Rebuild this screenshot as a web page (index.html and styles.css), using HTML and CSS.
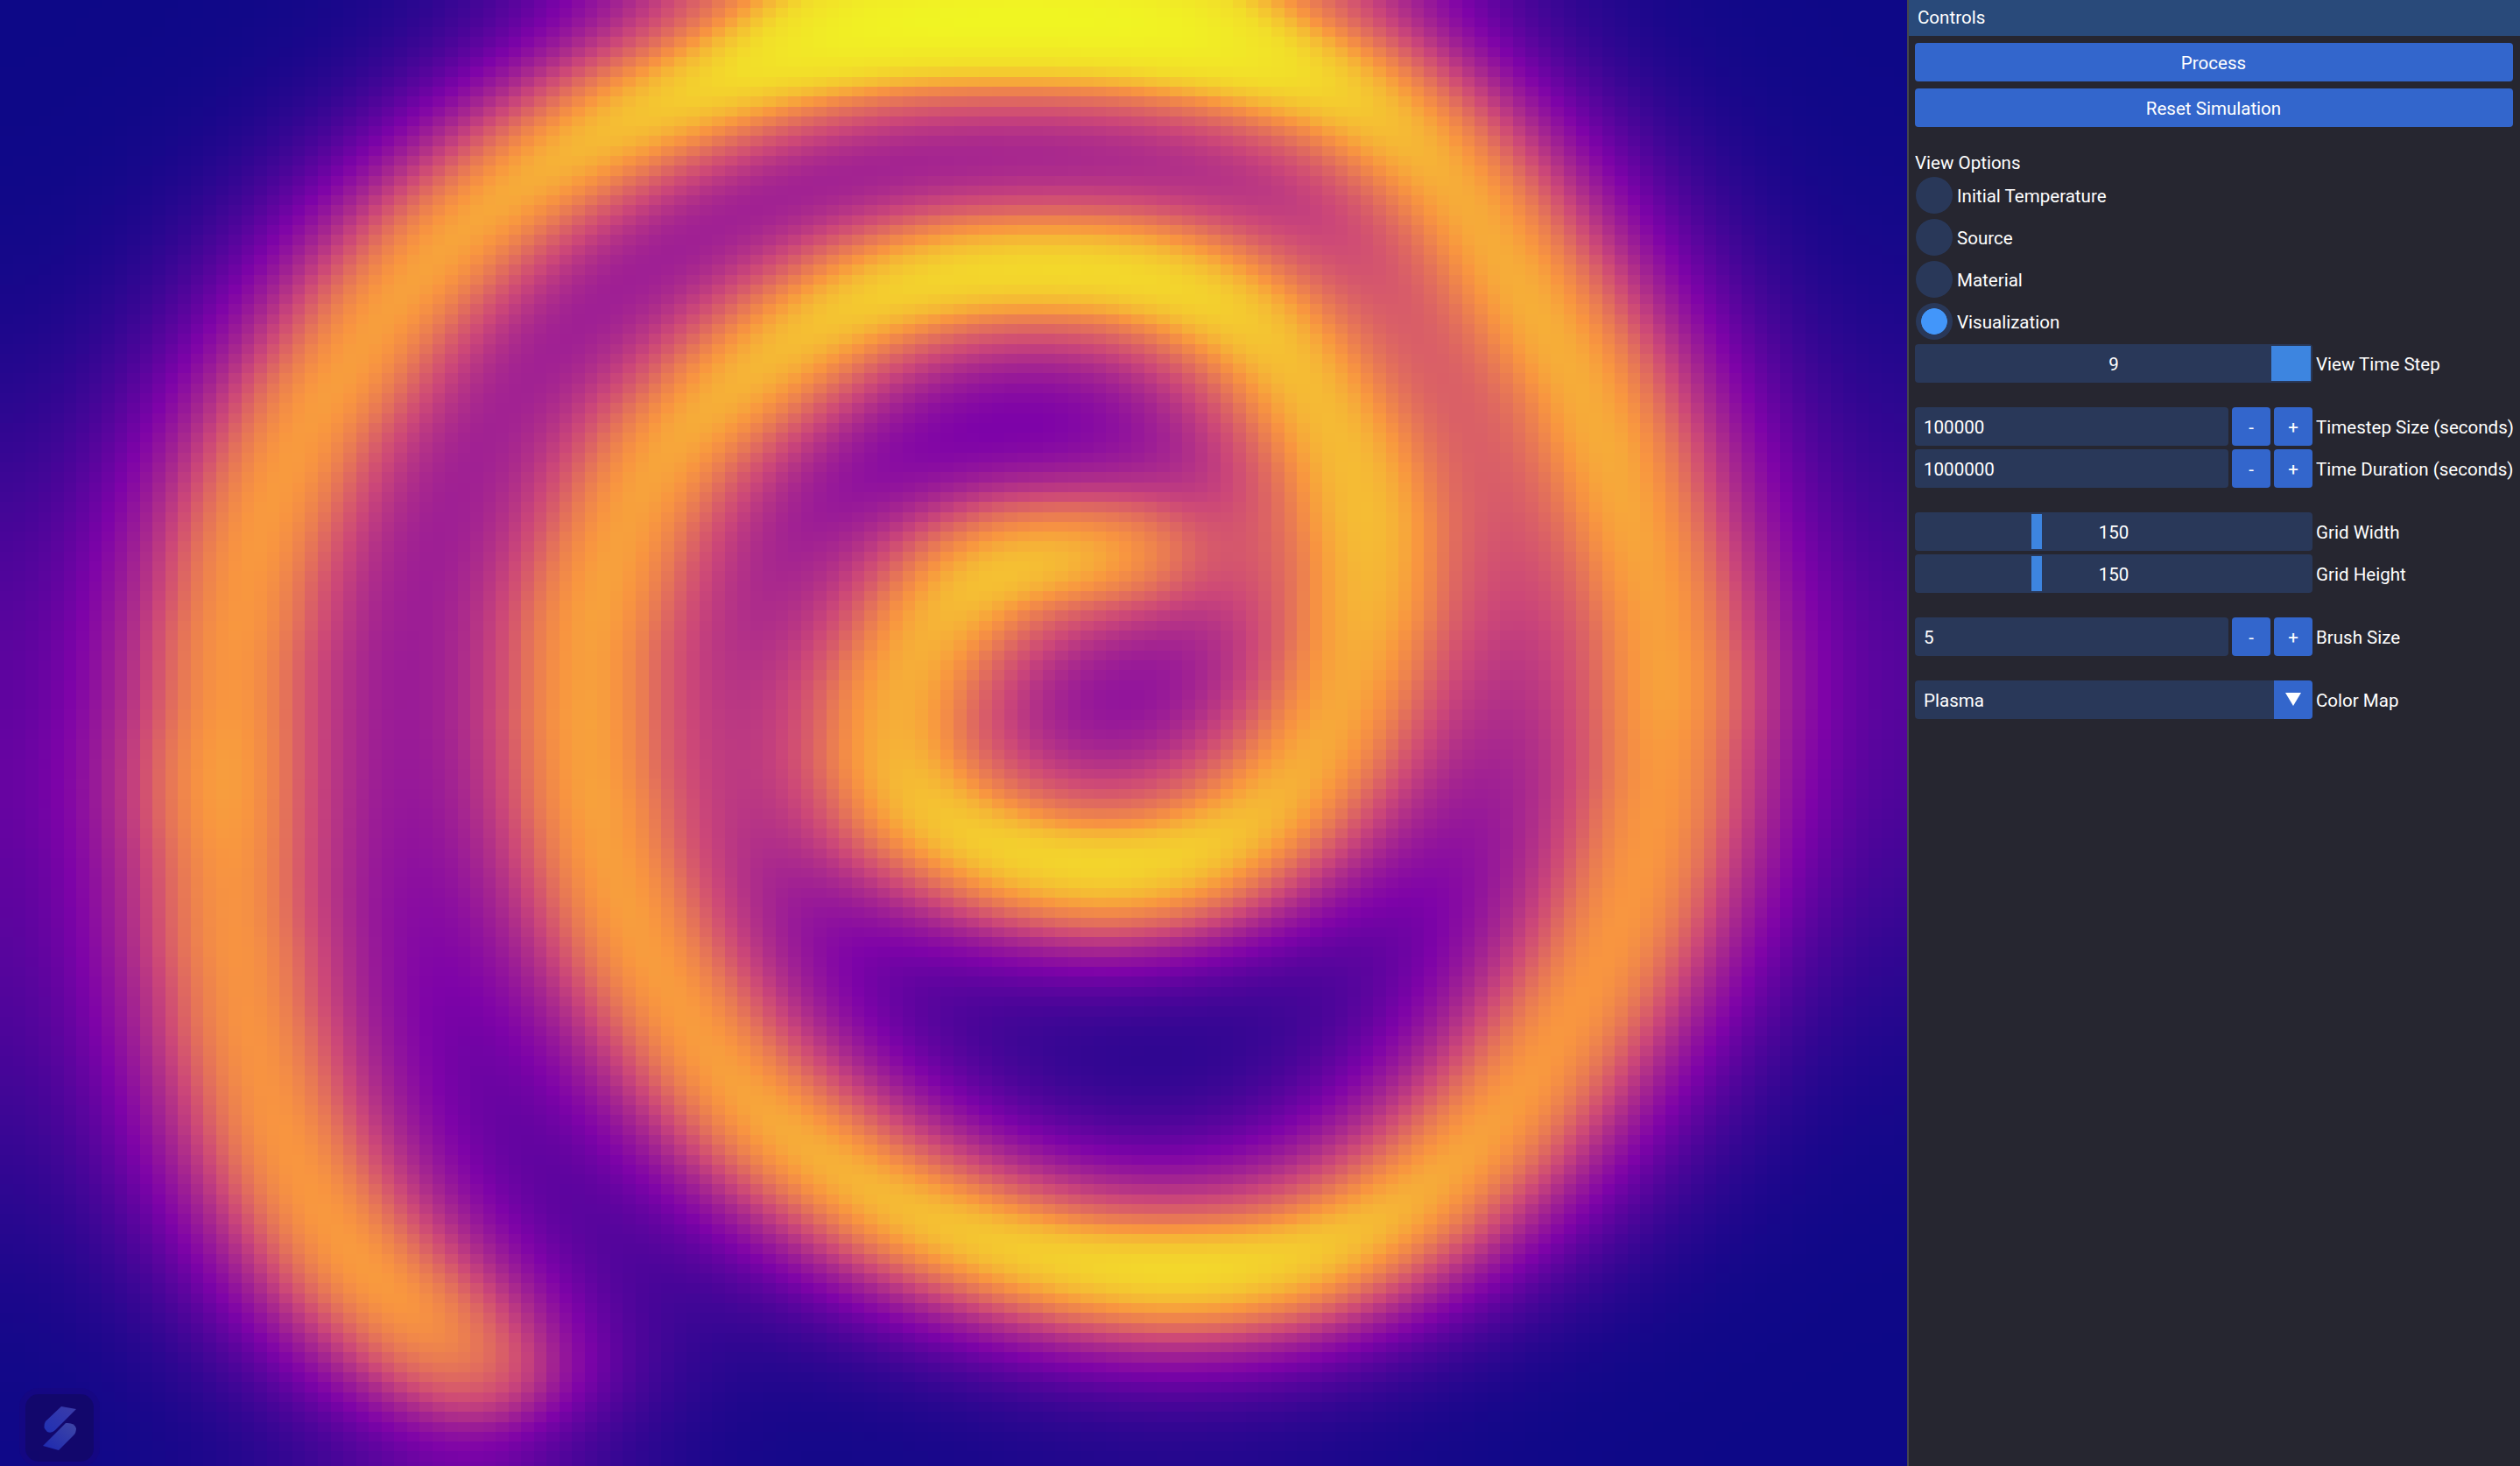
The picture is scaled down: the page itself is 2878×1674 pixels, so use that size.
FILE: index.html
```html
<!DOCTYPE html>
<html lang="en">
<head>
<meta charset="utf-8">
<title>Heat Simulation</title>
<link rel="stylesheet" href="styles.css">
</head>
<body>
<main class="viewport">
  <canvas class="field" id="field" width="150" height="150"></canvas>
  <svg class="badge" viewBox="0 0 92 90" aria-hidden="true">
    <defs>
      <linearGradient id="up" x1="0" y1="1" x2="1" y2="0"><stop offset="0" stop-color="#2030b4"/><stop offset="1" stop-color="#3c3ca8"/></linearGradient>
      <linearGradient id="down" x1="0" y1="1" x2="1" y2="0"><stop offset="0" stop-color="#1c28b0"/><stop offset="1" stop-color="#3f46a6"/></linearGradient>
    </defs>
    <rect class="badge-halo" x="0" y="0" width="92" height="90" rx="22"/>
    <rect class="badge-face" x="7" y="7" width="78" height="77" rx="15"/>
    <path fill="url(#up)" d="M48 21L65 24L41 48Q37 52 32 50Q26 45 30 38Z"/>
    <path fill="url(#down)" d="M53 40Q63 39 65 46Q65 51 62 54L45 71L27 66Z"/>
  </svg>
</main>
<aside class="panel">
  <h1 class="title">Controls</h1>
  <div class="body">
    <button class="btn wide">Process</button>
    <button class="btn wide">Reset Simulation</button>
    <h2 class="heading">View Options</h2>
    <label class="radio"><span class="dot"></span><span class="label">Initial Temperature</span></label>
    <label class="radio"><span class="dot"></span><span class="label">Source</span></label>
    <label class="radio"><span class="dot"></span><span class="label">Material</span></label>
    <label class="radio"><span class="dot on"></span><span class="label">Visualization</span></label>
    <div class="row"><div class="slider last"><span class="grab"></span><span class="label">9</span></div><span class="label">View Time Step</span></div>
    <div class="row gap"><div class="input">100000</div><button class="btn step">-</button><button class="btn step">+</button><span class="label">Timestep Size (seconds)</span></div>
    <div class="row"><div class="input">1000000</div><button class="btn step">-</button><button class="btn step">+</button><span class="label">Time Duration (seconds)</span></div>
    <div class="row gap"><div class="slider"><span class="grab"></span><span class="label">150</span></div><span class="label">Grid Width</span></div>
    <div class="row"><div class="slider"><span class="grab"></span><span class="label">150</span></div><span class="label">Grid Height</span></div>
    <div class="row gap"><div class="input">5</div><button class="btn step">-</button><button class="btn step">+</button><span class="label">Brush Size</span></div>
    <div class="row gap"><div class="combo"><span class="choice label">Plasma</span><span class="arrow"><svg width="18" height="16" viewBox="0 0 18 16"><path fill="#fff" d="M0 0H18L9 15Z"/></svg></span></div><span class="label">Color Map</span></div>
  </div>
</aside>
<script src="field.js"></script>
</body>
</html>
```
FILE: styles.css
```css
* { box-sizing: border-box; }
body { margin: 0; display: flex; width: 2878px; height: 1674px; overflow: hidden; background: #262630; font: 20.55px/28px Roboto, sans-serif; color: #fff; }
.viewport { position: relative; flex: none; display: flex; flex-direction: column; justify-content: center; width: 2178px; height: 1674px; overflow: hidden; }
.field { flex: none; display: block; width: 2178px; height: 1694px; margin-top: -9px; image-rendering: pixelated; }
.badge { position: absolute; left: 22px; top: 1585px; width: 92px; height: 90px; }
.badge-halo { fill: #17077e; opacity: .6; }
.badge-face { fill: #120868; opacity: .85; }
.panel { flex: none; width: 700px; border-left: 2px solid #45454f; }
.title { margin: 0; height: 41px; padding: 6px 10px; font-size: inherit; font-weight: 400; line-height: 28px; background: #294a7a; }
.body { display: flex; flex-direction: column; gap: 4px; padding: 8px 8px 0 7px; }
.btn { display: block; flex: none; height: 44px; padding: 2px 0 0; border: 0; border-radius: 4px; background: #3366cc; color: #fff; font: inherit; text-align: center; }
.wide { width: 100%; margin-bottom: 4px; padding-right: 1px; }
.heading { margin: 19px 0 0; height: 25px; font-size: inherit; font-weight: 400; line-height: 28px; }
.radio { display: flex; align-items: center; gap: 4px; height: 44px; }
.label { padding-top: 2px; }
.dot { width: 44px; height: 44px; border: 1px solid #262630; border-radius: 50%; background: #293859; }
.on { background: radial-gradient(circle, #4296fa 14.5px, #293859 15.2px); }
.row { display: flex; align-items: center; gap: 4px; height: 44px; white-space: nowrap; }
.gap { margin-top: 24px; }
.slider, .combo { position: relative; flex: none; width: 454px; height: 44px; border-radius: 4px; background: #293859; display: grid; place-items: center; }
.grab { position: absolute; left: 133px; top: 2px; width: 12px; height: 40px; background: #3d85e0; }
.last .grab { left: 407px; width: 45px; }
.input { flex: none; width: 358px; height: 44px; padding: 9px 10px; border-radius: 4px; background: #293859; }
.step { width: 44px; }
.combo { display: flex; overflow: hidden; }
.choice { flex: 1; padding-left: 10px; }
.arrow { width: 44px; height: 44px; background: #3366cc; display: grid; place-items: center; }
```
FILE: field.js
```js
// Heat diffusion from a painted spiral source, on a square grid with insulated edges.
const N = 150, STEPS = 9;
const BRUSH = 5.17;
const DIFFUSE_X = 8.4, DIFFUSE_Y = 4.56;
const GAIN = 0.1585;

// Brush path, in grid cells.
const STROKE = [
  [88.5,57.0],[83.2,57.0],[79.4,57.2],[75.8,60.0],[73.2,64.4],[71.3,68.7],[70.0,73.0],[69.6,77.8],[71.7,82.5],
  [75.7,86.2],[80.9,89.2],[87.1,90.7],[93.4,89.3],[98.1,85.6],[101.8,81.2],[104.5,76.1],[106.2,70.3],[107.4,63.7],
  [108.1,57.1],[107.0,50.4],[104.8,44.7],[102.0,39.4],[98.8,34.4],[94.3,30.2],[88.2,28.1],[81.3,27.7],[74.4,28.5],
  [67.6,31.2],[62.3,35.6],[57.6,40.4],[53.3,45.4],[50.2,51.2],[48.1,57.0],[46.6,62.7],[45.9,68.4],[45.6,74.1],
  [46.2,80.7],[47.3,87.4],[49.1,94.0],[52.0,100.5],[55.0,106.9],[59.2,113.0],[64.6,118.4],[70.3,123.3],[76.5,126.7],
  [83.0,129.3],[89.8,130.5],[95.8,130.6],[101.8,129.4],[107.4,126.0],[112.4,121.5],[117.1,115.8],[121.3,109.2],
  [125.0,101.5],[128.1,94.0],[130.1,86.5],[131.1,78.8],[131.6,71.2],[131.1,63.6],[129.5,56.0],[127.4,47.3],
  [124.7,38.8],[120.7,30.4],[116.6,22.8],[112.0,15.9],[106.7,10.5],[100.4,7.9],[94.7,5.8],[88.0,5.1],[81.3,4.8],
  [74.6,4.8],[67.0,5.5],[61.2,7.3],[55.4,10.1],[48.5,13.7],[41.7,18.8],[36.0,24.6],[31.4,30.4],[27.6,37.1],
  [24.0,43.7],[21.5,50.3],[19.6,56.9],[18.6,63.6],[17.8,70.3],[17.6,76.9],[17.6,84.5],[17.8,92.1],[18.7,99.6],
  [19.8,107.2],[21.5,114.7],[23.8,121.5],[27.1,128.0],[31.3,132.9],[35.3,137.6],[38.0,140.6]
];

const source = new Float64Array(N * N);
for (let p = 0; p + 1 < STROKE.length; p++) {
  const [x0, y0] = STROKE[p], [x1, y1] = STROKE[p + 1];
  for (let s = 0; s < 6; s++) {
    const cx = x0 + (x1 - x0) * s / 6, cy = y0 + (y1 - y0) * s / 6;
    for (let j = Math.max(1, Math.floor(cy - BRUSH)); j < Math.min(N, cy + BRUSH); j++)
      for (let i = Math.max(0, Math.floor(cx - BRUSH)); i < Math.min(N, cx + BRUSH); i++)
        if (Math.hypot(i + .5 - cx, j + .5 - cy) <= BRUSH) source[j * N + i] = 1;
  }
}

// Implicit step along one row or column (Thomas algorithm).
const cp = new Float64Array(N), dp = new Float64Array(N);
function solveLine(h, start, stride, a) {
  for (let i = 0; i < N; i++) {
    const lo = i ? -a : 0, hi = i < N - 1 ? -a : 0;
    const m = 1 - lo - hi - (i ? lo * cp[i - 1] : 0);
    cp[i] = hi / m;
    dp[i] = (h[start + i * stride] - (i ? lo * dp[i - 1] : 0)) / m;
  }
  for (let i = N - 1; i >= 0; i--)
    h[start + i * stride] = dp[i] - (i < N - 1 ? cp[i] * h[start + (i + 1) * stride] : 0);
}

const heat = new Float64Array(N * N);
for (let t = 0; t < STEPS; t++) {
  for (let k = 0; k < N * N; k++) heat[k] += source[k];
  for (let j = 0; j < N; j++) solveLine(heat, j * N, 1, DIFFUSE_X);
  for (let i = 0; i < N; i++) solveLine(heat, i, N, DIFFUSE_Y);
}

// Display response, then the plasma colour map.
const CURVE = [[0,0],[.7,.71],[.75,.765],[.81,.835],[.87,.895],[.91,.93],[1.07,1]];
function respond(v) {
  for (let i = 1; i < CURVE.length; i++)
    if (v <= CURVE[i][0]) {
      const [x0, y0] = CURVE[i - 1], [x1, y1] = CURVE[i];
      return y0 + (y1 - y0) * (v - x0) / (x1 - x0);
    }
  return 1;
}
const STOPS = [[13,8,135],[126,3,168],[204,71,120],[248,149,64],[240,249,33]];
const ctx = document.getElementById('field').getContext('2d');
const image = ctx.createImageData(N, N);
heat.forEach((v, k) => {
  const u = respond(v * GAIN) * 4, s = Math.min(3, Math.floor(u)), f = u - s;
  for (let c = 0; c < 3; c++) image.data[k * 4 + c] = STOPS[s][c] + (STOPS[s + 1][c] - STOPS[s][c]) * f;
  image.data[k * 4 + 3] = 255;
});
ctx.putImageData(image, 0, 0);
```
